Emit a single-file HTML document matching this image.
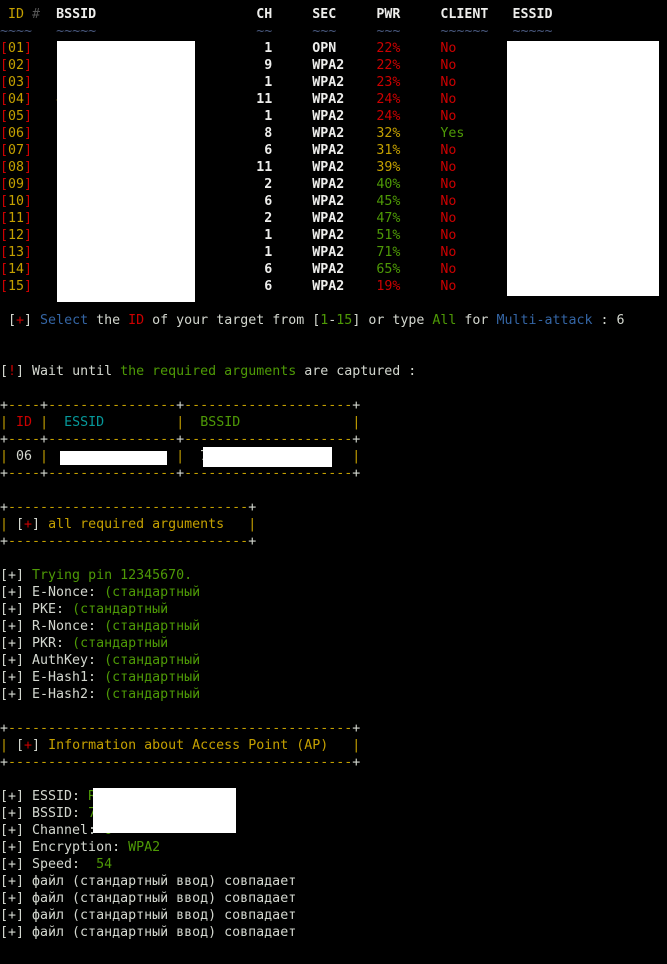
<!DOCTYPE html>
<html><head><meta charset="utf-8"><style>
html,body{margin:0;padding:0;background:#000;width:667px;height:964px;overflow:hidden;position:relative}
pre{margin:0;padding:6px 0 0 0;font-family:"DejaVu Sans Mono","Liberation Mono",monospace;font-size:13.3px;line-height:17px;color:#d3d7cf;white-space:pre}
.r{color:#cc0000}.y{color:#c4a000}.g{color:#4e9a06}.b{color:#3465a4}.c{color:#06989a}.w{color:#eeeeec;font-weight:bold}.t{color:#4a5a80}.d{color:#555}
.box{position:absolute;background:#fff}
</style></head><body>
<pre><span class="y"> ID</span> <span class="d">#</span>  <span class="w">BSSID</span>                    <span class="w">CH</span>     <span class="w">SEC</span>     <span class="w">PWR</span>     <span class="w">CLIENT</span>   <span class="w">ESSID</span>
<span class="t">~~~~</span>   <span class="t">~~~~~</span>                    <span class="t">~~</span>     <span class="t">~~~</span>     <span class="t">~~~</span>     <span class="t">~~~~~~</span>   <span class="t">~~~~~</span>
<span class="r">[</span><span class="y">01</span><span class="r">]</span>   <span class="y">E</span>                         <span class="w">1</span>     <span class="w">OPN</span>     <span class="r">22%</span>     <span class="r">No</span>
<span class="r">[</span><span class="y">02</span><span class="r">]</span>   <span class="y">2</span>                         <span class="w">9</span>     <span class="w">WPA2</span>    <span class="r">22%</span>     <span class="r">No</span>
<span class="r">[</span><span class="y">03</span><span class="r">]</span>   <span class="y">E</span>                         <span class="w">1</span>     <span class="w">WPA2</span>    <span class="r">23%</span>     <span class="r">No</span>
<span class="r">[</span><span class="y">04</span><span class="r">]</span>   <span class="y">4</span>                        <span class="w">11</span>     <span class="w">WPA2</span>    <span class="r">24%</span>     <span class="r">No</span>
<span class="r">[</span><span class="y">05</span><span class="r">]</span>   <span class="y">C</span>                         <span class="w">1</span>     <span class="w">WPA2</span>    <span class="r">24%</span>     <span class="r">No</span>
<span class="r">[</span><span class="y">06</span><span class="r">]</span>   <span class="y">7</span>                         <span class="w">8</span>     <span class="w">WPA2</span>    <span class="y">32%</span>     <span class="g">Yes</span>
<span class="r">[</span><span class="y">07</span><span class="r">]</span>   <span class="y">C</span>                         <span class="w">6</span>     <span class="w">WPA2</span>    <span class="y">31%</span>     <span class="r">No</span>
<span class="r">[</span><span class="y">08</span><span class="r">]</span>   <span class="y">C</span>                        <span class="w">11</span>     <span class="w">WPA2</span>    <span class="y">39%</span>     <span class="r">No</span>
<span class="r">[</span><span class="y">09</span><span class="r">]</span>   <span class="y">1</span>                         <span class="w">2</span>     <span class="w">WPA2</span>    <span class="g">40%</span>     <span class="r">No</span>
<span class="r">[</span><span class="y">10</span><span class="r">]</span>   <span class="y">C</span>                         <span class="w">6</span>     <span class="w">WPA2</span>    <span class="g">45%</span>     <span class="r">No</span>
<span class="r">[</span><span class="y">11</span><span class="r">]</span>   <span class="y">C</span>                         <span class="w">2</span>     <span class="w">WPA2</span>    <span class="g">47%</span>     <span class="r">No</span>
<span class="r">[</span><span class="y">12</span><span class="r">]</span>   <span class="y">E</span>                         <span class="w">1</span>     <span class="w">WPA2</span>    <span class="g">51%</span>     <span class="r">No</span>
<span class="r">[</span><span class="y">13</span><span class="r">]</span>   <span class="y">E</span>                         <span class="w">1</span>     <span class="w">WPA2</span>    <span class="g">71%</span>     <span class="r">No</span>
<span class="r">[</span><span class="y">14</span><span class="r">]</span>   <span class="y">E</span>                         <span class="w">6</span>     <span class="w">WPA2</span>    <span class="g">65%</span>     <span class="r">No</span>
<span class="r">[</span><span class="y">15</span><span class="r">]</span>   <span class="y">C</span>                         <span class="w">6</span>     <span class="w">WPA2</span>    <span class="r">19%</span>     <span class="r">No</span>
 
 [<span class="r">+</span>] <span class="b">Select</span> the <span class="r">ID</span> of your target from [<span class="g">1</span>-<span class="g">15</span>] or type <span class="g">All</span> for <span class="b">Multi-attack</span> : 6
 
 
[<span class="r">!</span>] Wait until <span class="g">the required arguments</span> are captured :
 
+<span class="y">----</span>+<span class="y">----------------</span>+<span class="y">---------------------</span>+
<span class="y">|</span> <span class="r">ID</span> <span class="y">|</span>  <span class="c">ESSID</span>         <span class="y">|</span>  <span class="g">BSSID</span>              <span class="y">|</span>
+<span class="y">----</span>+<span class="y">----------------</span>+<span class="y">---------------------</span>+
<span class="y">|</span> 06 <span class="y">|</span>                <span class="y">|</span>  7                  <span class="y">|</span>
+<span class="y">----</span>+<span class="y">----------------</span>+<span class="y">---------------------</span>+
 
+<span class="y">------------------------------</span>+
<span class="y">|</span> [<span class="r">+</span>] <span class="y">all required arguments</span>   <span class="y">|</span>
+<span class="y">------------------------------</span>+
 
[+] <span class="g">Trying pin 12345670.</span>
[+] E-Nonce: <span class="g">(стандартный</span>
[+] PKE: <span class="g">(стандартный</span>
[+] R-Nonce: <span class="g">(стандартный</span>
[+] PKR: <span class="g">(стандартный</span>
[+] AuthKey: <span class="g">(стандартный</span>
[+] E-Hash1: <span class="g">(стандартный</span>
[+] E-Hash2: <span class="g">(стандартный</span>
 
+<span class="y">-------------------------------------------</span>+
<span class="y">|</span> [<span class="r">+</span>] <span class="y">Information about Access Point (AP)</span>   <span class="y">|</span>
+<span class="y">-------------------------------------------</span>+
 
[+] ESSID: <span class="g">R</span>
[+] BSSID: <span class="g">7</span>
[+] Channel: <span class="g">6</span>
[+] Encryption: <span class="g">WPA2</span>
[+] Speed:  <span class="g">54</span>
[+] файл (стандартный ввод) совпадает
[+] файл (стандартный ввод) совпадает
[+] файл (стандартный ввод) совпадает
[+] файл (стандартный ввод) совпадает</pre>
<div class="box" style="left:57px;top:41px;width:138px;height:261px"></div>
<div class="box" style="left:507px;top:41px;width:152px;height:255px"></div>
<div class="box" style="left:60px;top:451px;width:107px;height:14px"></div>
<div class="box" style="left:203px;top:447px;width:129px;height:20px"></div>
<div class="box" style="left:93px;top:788px;width:143px;height:45px"></div>
</body></html>
